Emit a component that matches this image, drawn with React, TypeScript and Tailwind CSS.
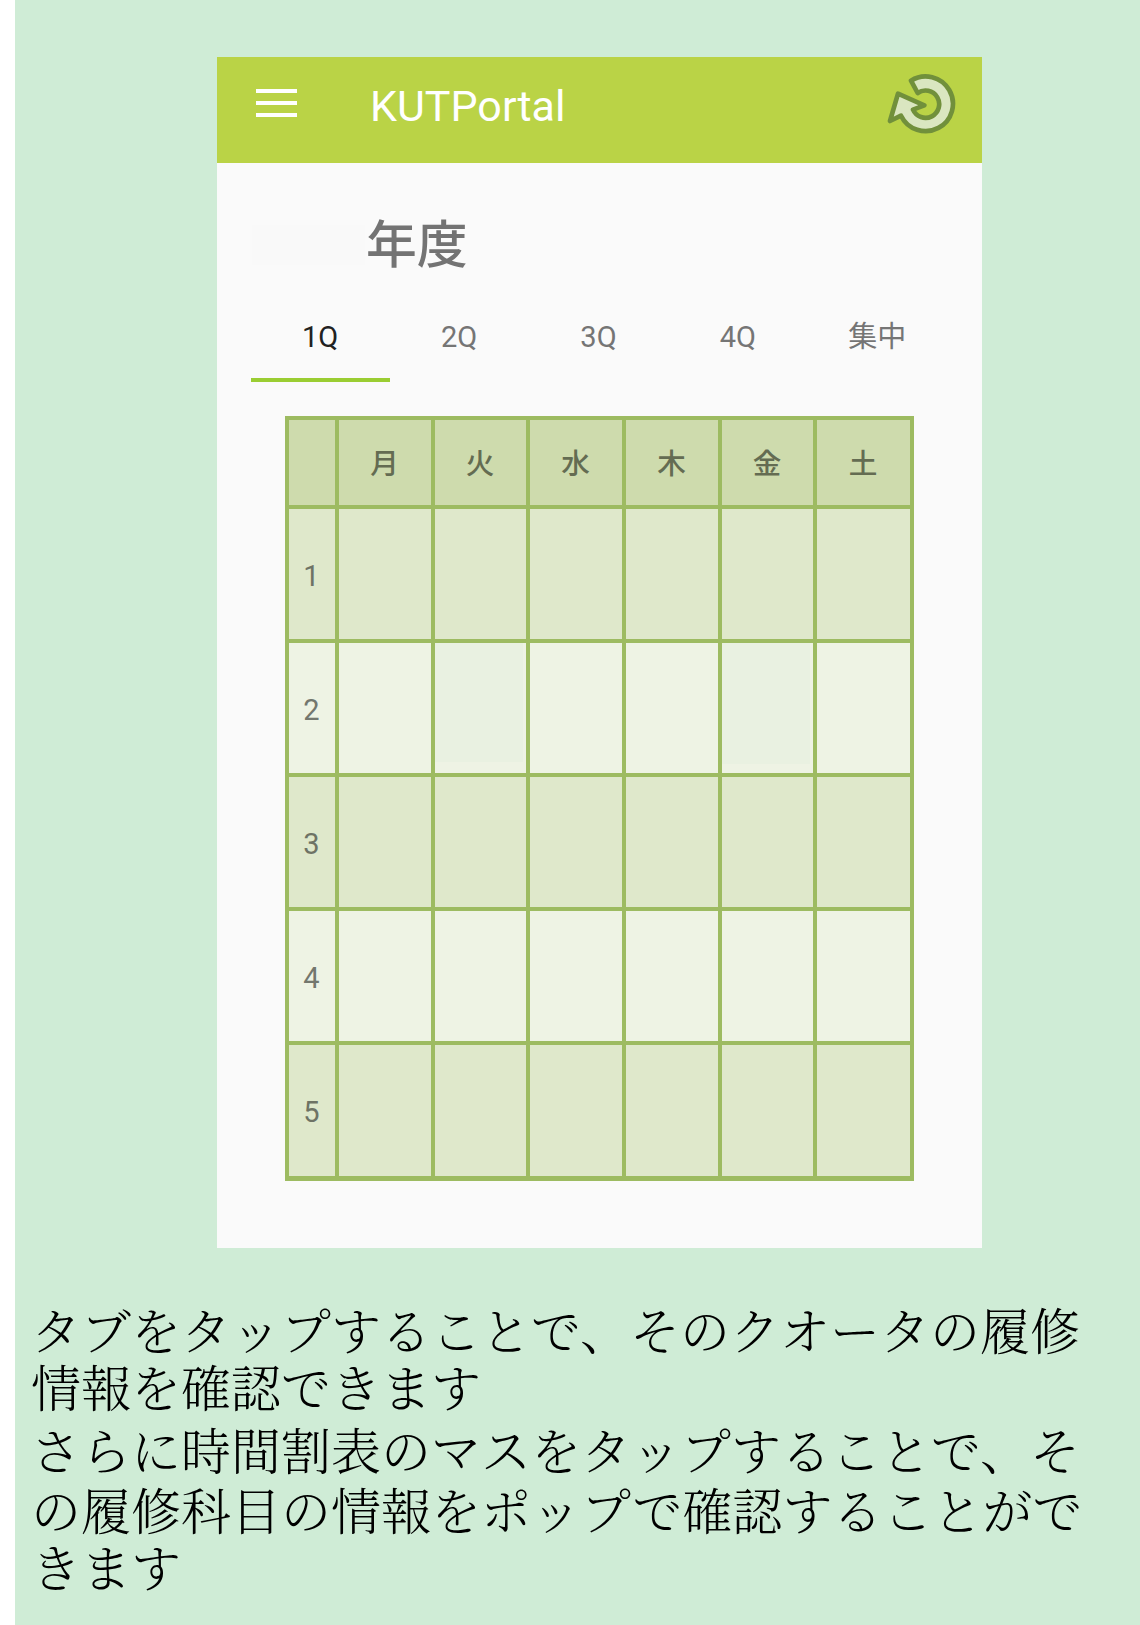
const tabs = ['1Q', '2Q', '3Q', '4Q', '集中'];
const days = ['', '月', '火', '水', '木', '金', '土'];
const periods = [1, 2, 3, 4, 5];

function Refresh() {
  return (
    <svg className="h-[64px] w-[72px]" viewBox="79 64 216 192" aria-label="更新">
      <path
        d="M154 90A82 82 0 1 1 124 195L91 211L115 129L194 164L160 177A41 41 0 1 0 174 127Z"
        fill="#dae6c0"
        stroke="#71903b"
        strokeWidth="14"
        strokeLinejoin="round"
      />
    </svg>
  );
}

function Cell({ period, day }: { period: number; day: number }) {
  const odd = period % 2 === 1;
  return (
    <div className={odd ? 'bg-[#dfe8cb]' : 'bg-[#eef3e4]'}>
      {period === 2 && day === 2 && <div className="h-[119px] w-[88px] bg-[#e9f1e1]" />}
      {period === 2 && day === 5 && <div className="h-[121px] w-[88px] bg-[#e9f1e1]" />}
    </div>
  );
}

export default function App() {
  return (
    <div className="h-[1625px] w-[1140px] overflow-hidden bg-white pl-[15px] font-[Roboto,'Noto_Sans_CJK_JP',sans-serif]">
      <div className="h-full bg-[#cfecd6] pt-[57px]">
        <main className="ml-[202px] h-[1191px] w-[765px] bg-[#fafafa]">
          <header className="flex h-[106px] items-start bg-[#bad346]">
            <div className="ml-[39px] mt-[32px] flex w-[41px] flex-col gap-[8px]">
              <div className="h-[4px] bg-white" />
              <div className="h-[4px] bg-white" />
              <div className="h-[4px] bg-white" />
            </div>
            <h1 className="ml-[73px] mt-[24px] w-[516px] text-[43px] leading-[50px] text-white">KUTPortal</h1>
            <div className="mt-[14.5px]">
              <Refresh />
            </div>
          </header>

          <div className="flex h-[139px] pl-[35px] pt-[62px]">
            <div className="h-[40px] w-[113px] bg-[#f9f9f9]" />
            <h2 className="-mt-[9px] ml-[1px] text-[50.8px] font-medium leading-[60px] text-[#737373]">年度</h2>
          </div>

          <nav className="ml-[34px] grid h-[80px] w-[697px] grid-cols-5">
            {tabs.map((tab, i) => (
              <div
                key={tab}
                className={
                  i === 0
                    ? 'border-b-4 border-[#9acd32] pr-[1px] pt-[15px] text-center text-[29px] leading-[40px] text-[#212121]'
                    : 'pr-[2px] pt-[15px] text-center text-[29px] leading-[40px] text-[#757575]'
                }
              >
                {tab}
              </div>
            ))}
          </nav>

          <section className="ml-[68px] mt-[34px] grid h-[765px] w-[629px] grid-cols-[46px_92px_91px_92px_92px_91px_93px] grid-rows-[85px_130px_130px_130px_130px_131px] gap-[4px] bg-[#9dbb61] p-[4px]">
            {days.map((day, i) => (
              <div key={i} className="flex items-center justify-center bg-[#cedbad] pr-[1px] pt-[3px] text-[28.6px] font-medium leading-none text-[#646c52]">
                {day}
              </div>
            ))}
            {periods.map((period) => [
              <div
                key={period}
                className={
                  period % 2 === 1
                    ? 'flex items-center justify-center bg-[#dfe8cb] pr-[1px] pt-[4px] text-[29px] leading-none text-[#6e7365]'
                    : 'flex items-center justify-center bg-[#eef3e4] pr-[1px] pt-[4px] text-[29px] leading-none text-[#73776e]'
                }
              >
                {period}
              </div>,
              ...[1, 2, 3, 4, 5, 6].map((day) => <Cell key={`${period}-${day}`} period={period} day={day} />),
            ])}
          </section>
        </main>

        <div className="ml-[16px] mt-[52px] whitespace-nowrap font-['Noto_Serif_CJK_JP','Noto_Sans_CJK_JP',serif] text-[50px] font-light leading-[56px] text-black">
          <p className="h-[57px]">タブをタップすることで、そのクオータの履修</p>
          <p className="h-[63px]">情報を確認できます</p>
          <p className="h-[60px]">さらに時間割表のマスをタップすることで、そ</p>
          <p className="h-[57px]">の履修科目の情報をポップで確認することがで</p>
          <p className="h-[56px]">きます</p>
        </div>
      </div>
    </div>
  );
}
